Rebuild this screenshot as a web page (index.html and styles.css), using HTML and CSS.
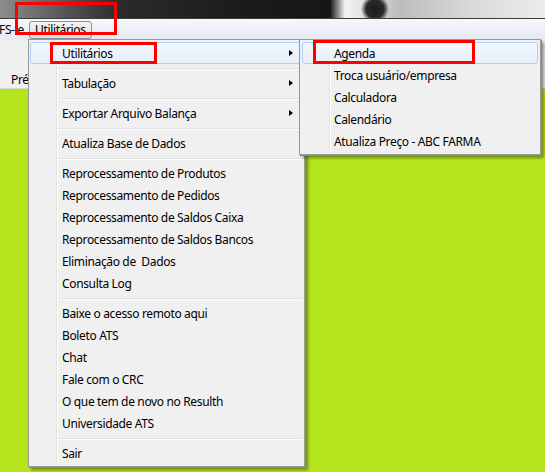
FILE: index.html
```html
<!DOCTYPE html>
<html lang="pt-BR">
<head>
    <meta charset="UTF-8">
    <title>Utilitários</title>
    <link rel="stylesheet" href="styles.css">
</head>
<body>
    <div class="screen">
        <div class="titlebar"></div>
        <div class="menubar">
            <span class="menubar-item cut">FS- e</span>
            <span class="menubar-item active">Utilitários</span>
        </div>
        <div class="toolbar">
            <span class="tab-label">Pré</span>
        </div>
        <div class="workspace"></div>

        <!-- dropdown: Utilitários -->
        <ul class="menu main-menu">
            <li class="item hover has-sub">Utilitários <span class="arrow"></span></li>
            <li class="sep"></li>
            <li class="item has-sub">Tabulação <span class="arrow"></span></li>
            <li class="sep"></li>
            <li class="item has-sub">Exportar Arquivo Balança <span class="arrow"></span></li>
            <li class="sep"></li>
            <li class="item">Atualiza Base de Dados</li>
            <li class="sep"></li>
            <li class="item">Reprocessamento de Produtos</li>
            <li class="item">Reprocessamento de Pedidos</li>
            <li class="item">Reprocessamento de Saldos Caixa</li>
            <li class="item">Reprocessamento de Saldos Bancos</li>
            <li class="item">Eliminação de&nbsp; Dados</li>
            <li class="item">Consulta Log</li>
            <li class="sep"></li>
            <li class="item">Baixe o acesso remoto aqui</li>
            <li class="item">Boleto ATS</li>
            <li class="item">Chat</li>
            <li class="item">Fale com o CRC</li>
            <li class="item">O que tem de novo no Resulth</li>
            <li class="item">Universidade ATS</li>
            <li class="sep"></li>
            <li class="item">Sair</li>
        </ul>

        <!-- submenu: Utilitários > -->
        <ul class="menu sub-menu">
            <li class="item hover">Agenda</li>
            <li class="item">Troca usuário/empresa</li>
            <li class="item">Calculadora</li>
            <li class="item">Calendário</li>
            <li class="item">Atualiza Preço - ABC FARMA</li>
        </ul>

        <!-- red annotations -->
        <div class="mark mark-bar"></div>
        <div class="mark mark-main"></div>
        <div class="mark mark-sub"></div>
    </div>
</body>
</html>
```

FILE: styles.css
```css
body {
    margin: 0;
    font-family: "Noto Sans", "Open Sans", sans-serif;
    font-size: 12px;
    letter-spacing: -0.35px;
    color: #000;
}
.screen {
    position: relative;
    width: 545px;
    height: 472px;
    display: flex;
    flex-direction: column;
    overflow: hidden;
    background-color: #b5e61d;
}
.titlebar {
    height: 18px;
    border-bottom: 1px solid #3c3c3c;
    background:
        radial-gradient(circle at 375px 9px, #1c1c1c 0, #2a2a2a 9px, rgba(40,40,40,0) 14px),
        linear-gradient(to right, #8d8d8d 0, #5a5a5a 60px, #2b2b2b 120px, #1a1a1a 250px, #161616 330px, #f2f2f2 345px, #e8e8e8 358px, #bdbdbd 400px, #d8d8d8 470px, #ededed 545px);
}
.menubar {
    height: 21px;
    display: flex;
    align-items: center;
    background: linear-gradient(#f7f8fb 0, #eef1f8 40%, #e3e8f2 100%);
}
.menubar-item {
    line-height: 16px;
}
.cut {
    width: 29px;
    text-indent: -1px;
    white-space: pre;
}
.active {
    height: 16px;
    padding: 0 5px;
    border: 1px solid #8b9097;
    border-radius: 3px;
    background: linear-gradient(#f4f4f4, #dcdcdc);
}
.toolbar {
    height: 48px;
    padding-left: 11px;
    background-color: #f0f0f0;
    border-bottom: 1px solid #d8d8d8;
}
.tab-label {
    display: block;
    margin-top: 32px;
    line-height: 16px;
}
.workspace {
    flex: 1;
    background-color: #b5e61d;
}

/* menus */
.menu {
    position: absolute;
    margin: 0;
    list-style: none;
    box-sizing: border-box;
    border: 1px solid #979797;
    background-color: #f0f0f0;
    box-shadow: 1px 1px 0 #8a8a8a, 3px 3px 3px rgba(0, 0, 0, 0.4);
}
.main-menu {
    left: 28px;
    top: 39px;
    width: 277px;
    padding: 2px 1px;
    background-image: linear-gradient(to right, transparent 27px, #e2e3e3 27px, #e2e3e3 28px, #fff 28px, #fff 29px, transparent 29px);
}
.sub-menu {
    left: 299px;
    top: 39px;
    width: 242px;
    padding: 2px;
    background-image: linear-gradient(to right, transparent 29px, #e2e3e3 29px, #e2e3e3 30px, #fff 30px, #fff 31px, transparent 31px);
}
.item {
    position: relative;
    display: flex;
    align-items: center;
    box-sizing: border-box;
    height: 22px;
    padding-left: 32px;
    white-space: nowrap;
}
.item.hover {
    border: 1px solid #aecff7;
    border-radius: 3px;
    padding-left: 31px;
    background: linear-gradient(#f4f8fd, #e6eefa);
}
.arrow {
    width: 0;
    height: 0;
    margin-left: auto;
    margin-right: 10px;
    border-left: 4px solid #000;
    border-top: 3.5px solid transparent;
    border-bottom: 3.5px solid transparent;
}
.item.hover .arrow {
    margin-right: 9px;
}
.sep {
    height: 8px;
    margin-left: 28px;
    box-sizing: border-box;
    padding-top: 4px;
}
.sep::before {
    content: "";
    display: block;
    height: 1px;
    background-color: #e0e0e0;
    border-bottom: 1px solid #fff;
}

/* annotations */
.mark {
    position: absolute;
    box-sizing: border-box;
    border: 3px solid #ff0000;
}
.mark-bar {
    left: 15px;
    top: 2px;
    width: 102px;
    height: 33px;
}
.mark-main {
    left: 50px;
    top: 42px;
    width: 107px;
    height: 22px;
}
.mark-sub {
    left: 313px;
    top: 40px;
    width: 162px;
    height: 24px;
}
```
